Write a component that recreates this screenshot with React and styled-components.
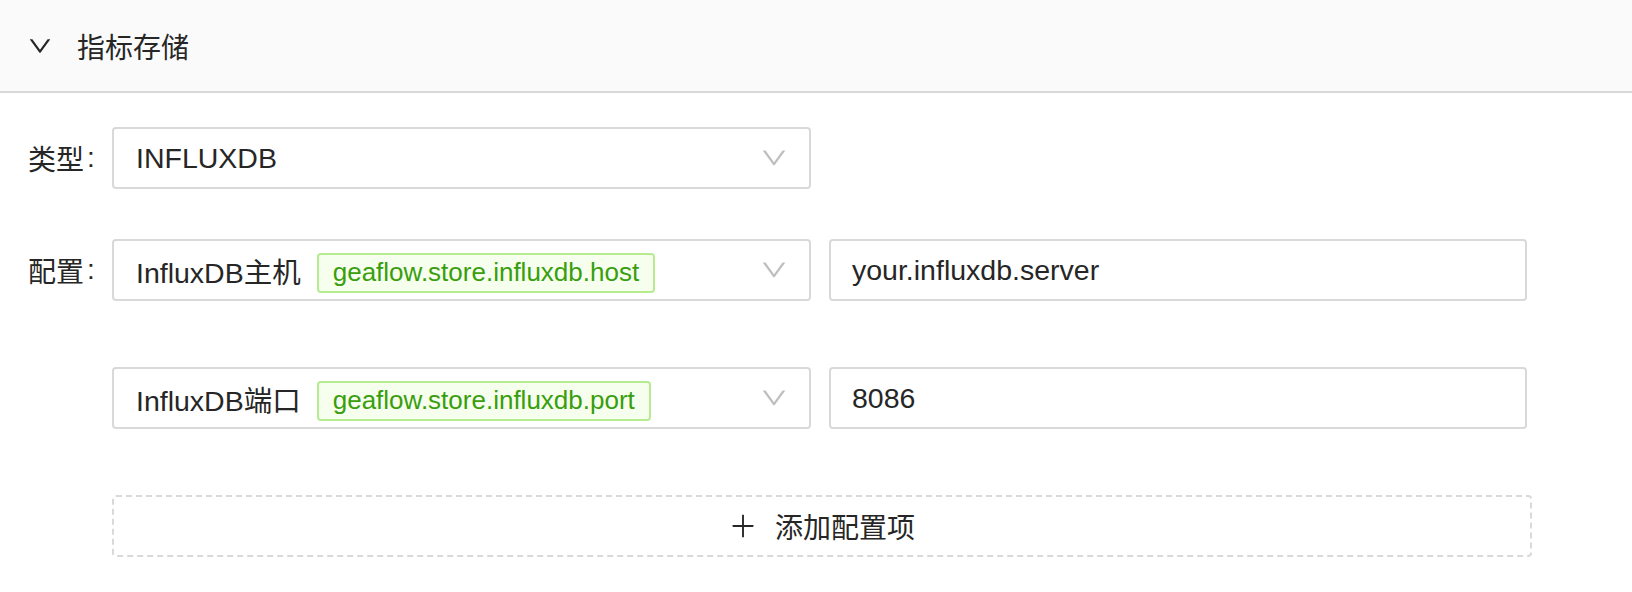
import styled, { createGlobalStyle } from "styled-components";

const GlobalStyle = createGlobalStyle`
  html, body {
    margin: 0;
    padding: 0;
    background: #fff;
  }
  body {
    font-family: "Liberation Sans", "Noto Sans CJK SC", sans-serif;
    color: #262626;
  }
`;

const Panel = styled.section`
  width: 1632px;
  height: 592px;
  overflow: hidden;
  background: #fff;
`;

const PanelHeader = styled.div`
  height: 91px;
  display: flex;
  align-items: center;
  padding-left: 28px;
  background: #fafafa;
  border-bottom: 2px solid #d9d9d9;
  font-size: 28px;
  color: #262626;
  box-sizing: content-box;

  svg {
    width: 24px;
    height: 24px;
    margin-right: 25px;
    fill: #262626;
  }
`;

const PanelBody = styled.div`
  padding: 34px 0 0 28px;
`;

const FormItem = styled.div`
  display: flex;
  align-items: flex-start;
  margin-bottom: ${(p) => p.$gap || 0}px;
`;

const Label = styled.label`
  width: 84px;
  flex: none;
  height: 62px;
  display: flex;
  align-items: center;
  font-size: 28px;
  color: #262626;

  &::after {
    content: ":";
    margin-left: 3px;
  }
`;

const Control = styled.div`
  width: 1420px;
  display: flex;
  flex-direction: column;
`;

const ConfigRow = styled.div`
  display: grid;
  grid-template-columns: 699px 698px;
  column-gap: 18px;
  margin-bottom: ${(p) => p.$gap || 0}px;
`;

const SelectBox = styled.div`
  width: ${(p) => p.$width || "auto"};
  height: 62px;
  box-sizing: border-box;
  border: 2px solid #d9d9d9;
  border-radius: 4px;
  background: #fff;
  display: flex;
  align-items: center;
  padding: 0 22px 0 22px;
  font-size: 28.5px;
  color: #262626;

  svg {
    margin-left: auto;
    width: 26px;
    height: 26px;
    fill: #bfbfbf;
  }
`;

const InputBox = styled.div`
  height: 62px;
  box-sizing: border-box;
  border: 2px solid #d9d9d9;
  border-radius: 4px;
  background: #fff;
  display: flex;
  align-items: center;
  padding: 0 21px;
  font-size: 28.5px;
  color: #262626;
`;

const Tag = styled.span`
  margin: 5px 0 0 16px;
  height: 40px;
  box-sizing: border-box;
  display: inline-flex;
  align-items: center;
  padding: 0 14px;
  border: 2px solid #b7eb8f;
  border-radius: 4px;
  background: #f6ffed;
  color: #389e0d;
  font-size: 26px;
  white-space: nowrap;
`;

const AddButton = styled.button`
  width: 1420px;
  height: 62px;
  box-sizing: border-box;
  border: 2px dashed #d9d9d9;
  border-radius: 4px;
  background: #fff;
  display: flex;
  align-items: center;
  justify-content: center;
  gap: 18px;
  padding: 0;
  font-family: inherit;
  font-size: 28px;
  color: #262626;
  cursor: pointer;

  svg {
    width: 28px;
    height: 28px;
    fill: #262626;
  }
`;

function DownIcon() {
  return (
    <svg viewBox="64 64 896 896">
      <path d="M884 256h-75c-5.1 0-9.9 2.5-12.9 6.6L512 654.2 227.9 262.6c-3-4.1-7.8-6.6-12.9-6.6h-75c-6.5 0-10.3 7.4-6.5 12.7l352.6 486.1c12.8 17.6 39 17.6 51.7 0l352.6-486.1c3.9-5.3.1-12.7-6.4-12.7z" />
    </svg>
  );
}

function PlusIcon() {
  return (
    <svg viewBox="64 64 896 896">
      <path d="M490 152h44q8 0 8 8v704q0 8-8 8h-44q-8 0-8-8V160q0-8 8-8z" />
      <path d="M192 482h640q8 0 8 8v44q0 8-8 8H192q-8 0-8-8v-44q0-8 8-8z" />
    </svg>
  );
}

const configs = [
  { name: "InfluxDB主机", key: "geaflow.store.influxdb.host", value: "your.influxdb.server" },
  { name: "InfluxDB端口", key: "geaflow.store.influxdb.port", value: "8086" },
];

export default function App() {
  return (
    <>
      <GlobalStyle />
      <Panel>
        <PanelHeader>
          <DownIcon />
          指标存储
        </PanelHeader>
        <PanelBody>
          <FormItem $gap={50}>
            <Label>类型</Label>
            <SelectBox $width="699px">
              INFLUXDB
              <DownIcon />
            </SelectBox>
          </FormItem>
          <FormItem>
            <Label>配置</Label>
            <Control>
              {configs.map((c) => (
                <ConfigRow key={c.key} $gap={66}>
                  <SelectBox>
                    {c.name}
                    <Tag>{c.key}</Tag>
                    <DownIcon />
                  </SelectBox>
                  <InputBox>{c.value}</InputBox>
                </ConfigRow>
              ))}
              <AddButton>
                <PlusIcon />
                添加配置项
              </AddButton>
            </Control>
          </FormItem>
        </PanelBody>
      </Panel>
    </>
  );
}
